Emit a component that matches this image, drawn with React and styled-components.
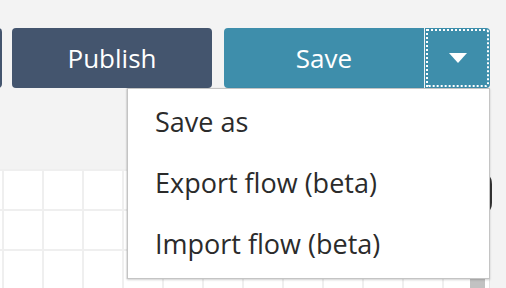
import React from "react";
import styled, { createGlobalStyle } from "styled-components";

const Global = createGlobalStyle`
  html, body { margin: 0; padding: 0; }
  body {
    background: #f3f3f3;
    font-family: "Open Sans", "Noto Sans", sans-serif;
    overflow: hidden;
  }
`;

const Page = styled.div`
  width: 506px;
  height: 288px;
  display: flex;
  flex-direction: column;
  overflow: hidden;
  background: #f3f3f3;
`;

const Header = styled.div`
  height: 169px;
  flex: none;
  padding-top: 28px;
  box-sizing: border-box;
  display: flex;
  align-items: flex-start;
  margin-left: -198px;
  position: relative;
  z-index: 2;
`;

const Button = styled.button`
  height: 60px;
  width: ${(p) => p.$w || 200}px;
  margin-left: ${(p) => p.$ml || 0}px;
  border: none;
  border-radius: ${(p) => p.$radius || "4px"};
  background: ${(p) => p.$bg};
  color: #fff;
  font-family: "Open Sans", "Noto Sans", sans-serif;
  font-size: 26px;
  font-weight: 400;
  padding: 0;
  display: flex;
  align-items: center;
  justify-content: center;
  cursor: pointer;
`;

const SplitGroup = styled.div`
  display: flex;
  margin-left: 12px;
  position: relative;
`;

const Caret = styled.button`
  height: 60px;
  width: 65px;
  margin-left: 1px;
  border: none;
  border-radius: 0 4px 4px 0;
  background: #3e8eab;
  outline: 2px dotted #fff;
  outline-offset: -3px;
  display: flex;
  align-items: center;
  justify-content: center;
  padding: 0;
`;

const Menu = styled.ul`
  position: absolute;
  top: 60px;
  right: 0;
  width: 363px;
  margin: 0;
  padding: 2px 0 4px;
  list-style: none;
  background: #fff;
  border: 1px solid #c4c4c4;
  box-shadow: 0 1px 2px rgba(0, 0, 0, 0.18), -1px 0 1px rgba(0, 0, 0, 0.06);
  box-sizing: border-box;
`;

const MenuItem = styled.li`
  height: 61px;
  display: flex;
  align-items: center;
  padding-left: 27px;
  font-size: 27px;
  color: #2b2b2b;
  font-family: "Open Sans", "Noto Sans", sans-serif;
`;

const Canvas = styled.div`
  flex: 1;
  display: flex;
  position: relative;
`;

const Grid = styled.div`
  flex: 1;
  background-color: #fff;
  background-image:
    linear-gradient(to right, #efefef 2px, transparent 2px),
    linear-gradient(to bottom, #efefef 2px, transparent 2px);
  background-size: 40px 40px;
  background-position: 2px 0, 0 0;
`;

const SidePanel = styled.div`
  width: 16px;
  flex: none;
  background: #f3f3f3;
  border-left: 1px solid #e4e4e4;
`;

const Toggle = styled.div`
  position: absolute;
  left: 466px;
  top: 1px;
  width: 26px;
  height: 47px;
  background: #333;
  border-radius: 0 14px 14px 0;
`;

const Node = styled.div`
  position: absolute;
  left: 470px;
  top: 108px;
  width: 15px;
  height: 20px;
  background: #c2c2c2;
`;

export default function App() {
  return (
    <Page>
      <Global />
      <Header>
        <Button $bg="#44556e" />
        <Button $bg="#44556e" $ml={10}>Publish</Button>
        <SplitGroup>
          <Button $bg="#3e8eab" $radius="4px 0 0 4px">Save</Button>
          <Caret aria-label="More save options">
            <svg width="18" height="10" viewBox="0 0 18 10">
              <path d="M0 0 H18 L9 10 Z" fill="#fff" />
            </svg>
          </Caret>
          <Menu>
            <MenuItem>Save as</MenuItem>
            <MenuItem>Export flow (beta)</MenuItem>
            <MenuItem>Import flow (beta)</MenuItem>
          </Menu>
        </SplitGroup>
      </Header>
      <Canvas>
        <Grid />
        <SidePanel />
        <Toggle />
        <Node />
      </Canvas>
    </Page>
  );
}
